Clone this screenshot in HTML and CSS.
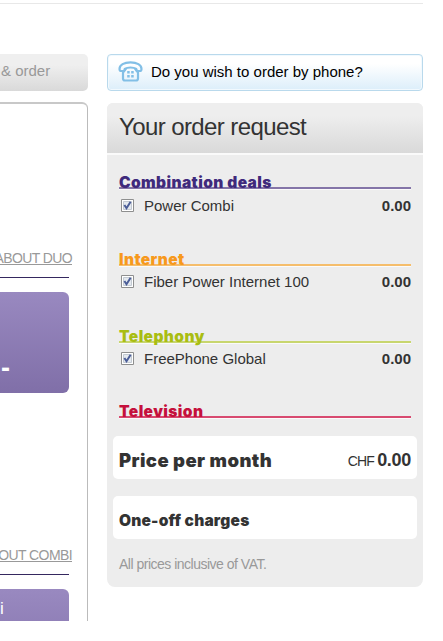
FILE: index.html
```
<!doctype html>
<html lang="en">
  <head>
    <meta charset="utf-8">
    <title>Your order request</title>
    <link rel="stylesheet" href="styles.css">
  </head>

  <body>
    <!-- checkbox artwork, shared by the order lines -->
    <svg class="defs" width="0" height="0">
      <symbol id="checkbox" viewBox="0 0 13 13">
        <path fill="#fff" stroke="#8e8f8f" d="M.5.5h12v12H.5z"/>
        <path fill="#e4e9ef" stroke="#c3cad2" d="M2.5 2.5h8v8h-8z"/>
        <path fill="none" stroke="#4b5d97" stroke-width="2" d="M3.4 6l2.1 3.2L9.6 2.8"/>
      </symbol>
    </svg>

    <div id="page">
      <div id="content">
        <div class="step">&amp; order</div>
        <div class="offers">
          <div class="offer">
            <a class="about"><span>ABOUT DUO</span></a>
            <div class="price">-</div>
          </div>
          <div class="offer">
            <a class="about"><span>ABOUT COMBI</span></a>
            <div class="price name">i</div>
          </div>
        </div>
      </div>

      <div id="sidebar">
        <a class="phone">
          <svg width="25" height="21" viewBox="0 0 25 21" fill="none" stroke="#82bfe6" stroke-width="2.2" stroke-linejoin="round">
            <path d="M1.500 8C1.500 4 6 1.300 12.500 1.300S23.500 4 23.500 8c0 1.400-.6 2-1.600 2h-2.100c-1.200 0-1.500-.7-1.500-2.100-3-1.900-8.600-1.900-11.600 0C6.700 9.300 6.400 10 5.200 10H3.100c-1 0-1.600-.6-1.600-2z"/>
            <path d="M8 7.500L5 11.500v6c0 1.300.7 2 2 2h11c1.300 0 2-.7 2-2v-6L17 7.500"/>
            <path stroke-width="2.500" stroke-dasharray="2.500 1.500" d="M9.200 11.300h6.500M9.200 15.200h6.500"/>
          </svg>
          <span>Do you wish to order by phone?</span>
        </a>

        <div class="request">
          <h2><span>Your order request</span></h2>

          <div class="group deals">
            <h3><span>Combination deals</span></h3>
            <div class="line"><svg><use href="#checkbox"/></svg><span>Power Combi</span><b>0.00</b></div>
          </div>
          <div class="group internet">
            <h3><span>Internet</span></h3>
            <div class="line"><svg><use href="#checkbox"/></svg><span>Fiber Power Internet 100</span><b>0.00</b></div>
          </div>
          <div class="group telephony">
            <h3><span>Telephony</span></h3>
            <div class="line"><svg><use href="#checkbox"/></svg><span>FreePhone Global</span><b>0.00</b></div>
          </div>
          <div class="group television">
            <h3><span>Television</span></h3>
          </div>

          <div class="total">
            <strong>Price per month</strong>
            <span class="amount">CHF <b>0.00</b></span>
          </div>
          <div class="total oneoff">
            <strong>One-off charges</strong>
          </div>
          <p class="vat">All prices inclusive of VAT.</p>
        </div>
      </div>
    </div>
  </body>
</html>
```

FILE: styles.css
```
body {
  margin: 0;
  background: #fff;
  color: #333;
  font-family: "Liberation Sans", Arial, sans-serif;
  overflow: hidden;
}

h2, h3, p {
  margin: 0;
}

.defs {
  display: block;
}

#page {
  box-sizing: border-box;
  display: flex;
  gap: 19px;
  width: 423px;
  height: 618px;
  margin-top: 3px;
  padding-top: 50px;
  border-top: 1px solid #e8e8e8;
  overflow: hidden;
}

#content {
  width: 88px;
  display: flex;
  flex-direction: column;
  gap: 11px;
}

.step {
  flex: none;
  height: 37px;
  line-height: 34px;
  padding-left: 1px;
  border-radius: 0 5px 5px 0;
  background: linear-gradient(#efefef 30%, #d9d9d9);
  color: #999;
  font-size: 15px;
  white-space: nowrap;
}

.offers {
  flex: 1;
  box-sizing: border-box;
  min-height: 0;
  padding: 145px 18px 0 0;
  border-top: 2px solid #c8c8c8;
  border-right: 1px solid #bbb;
  border-top-right-radius: 6px;
}

.offer {
  height: 297px;
}

.about {
  display: flex;
  justify-content: flex-end;
  height: 29px;
  margin-right: -3px;
  line-height: 18px;
  color: #999;
  font-size: 14px;
  letter-spacing: -0.6px;
  text-decoration: underline;
  white-space: nowrap;
}

.price {
  position: relative;
  box-sizing: border-box;
  height: 101px;
  margin-top: 14px;
  padding: 60px 0 0 1px;
  border-radius: 0 6px 6px 0;
  background: linear-gradient(#9989c0, #806fa8);
  color: #fff;
  font-size: 27px;
  font-weight: bold;
  line-height: 32px;
}

/* rule between the link and the price box */
.price:before {
  content: "";
  position: absolute;
  top: -15px;
  left: 0;
  right: 0;
  height: 1px;
  background: #35285f;
}

.name {
  padding: 4px 0 0;
  font-size: 17px;
  font-weight: normal;
}

#sidebar {
  width: 316px;
}

.phone {
  box-sizing: border-box;
  display: flex;
  align-items: center;
  gap: 8px;
  height: 37px;
  margin-bottom: 12px;
  padding: 0 0 2px 10px;
  border: 1px solid #b9d9ec;
  border-radius: 4px;
  background: linear-gradient(#fff 25%, #dceefa);
  box-shadow: inset 0 0 0 1px #f1f9fe;
  color: #000;
  font-size: 15px;
}

.request {
  box-sizing: border-box;
  height: 484px;
  border-radius: 6px 6px 8px 8px;
  background: #ededed;
}

h2 {
  height: 50px;
  margin-bottom: 17px;
  padding-left: 12px;
  border-bottom: 2px solid #fafafa;
  border-radius: 6px 6px 0 0;
  background: linear-gradient(#eee 25%, #d9d9d9) padding-box;
  font-size: 24px;
  font-weight: normal;
  line-height: 47px;
  letter-spacing: -0.6px;
}

.group {
  height: 77px;
  margin: 0 12px;
}

h3 {
  height: 15px;
  border-bottom: 2px solid;
  box-shadow: 0 1px #fafafa;
  font-family: Inter, "Arial Black", sans-serif;
  font-size: 15.5px;
  font-weight: 900;
  line-height: 21px;
  letter-spacing: 0.4px;
}

.deals h3 {
  border-color: #8475a8;
  color: #3f2a7c;
}

.internet h3 {
  border-color: #f5bd6b;
  color: #f7991c;
}

.telephony h3 {
  border-color: #c8d66e;
  color: #a9bd12;
}

.telephony {
  height: 75px;
}

.television h3 {
  border-color: #d84a70;
  color: #c5103c;
}

.television {
  height: 35px;
}

.line {
  display: flex;
  align-items: center;
  height: 33px;
  font-size: 15px;
}

.internet .line,
.telephony .line {
  height: 31px;
}

.line svg {
  width: 13px;
  height: 13px;
  margin: 0 10px 0 2px;
}

.line b {
  margin-left: auto;
}

.total {
  box-sizing: border-box;
  display: flex;
  align-items: center;
  justify-content: space-between;
  height: 43px;
  margin: 0 6px 17px;
  padding: 5px 6px 0;
  border-radius: 5px;
  background: #fff;
}

.total strong {
  font-family: Inter, "Arial Black", sans-serif;
  font-size: 18.5px;
  font-weight: 900;
  letter-spacing: 0.4px;
}

.oneoff strong {
  font-size: 15.5px;
  letter-spacing: 0.2px;
}

.amount {
  font-size: 14px;
  letter-spacing: -0.8px;
}

.amount b {
  font-size: 18px;
  letter-spacing: -0.3px;
}

.vat {
  padding-left: 12px;
  color: #999;
  font-size: 14px;
  line-height: 17px;
  letter-spacing: -0.5px;
}
```
